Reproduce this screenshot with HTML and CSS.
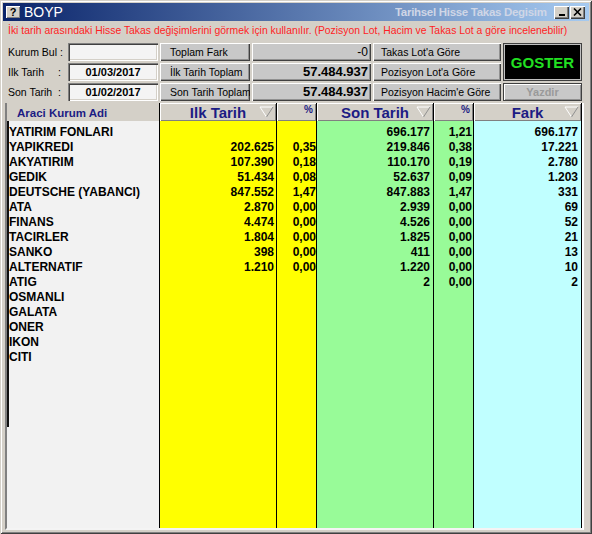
FILE: index.html
```html
<!DOCTYPE html>
<html lang="tr">
<head>
  <meta charset="UTF-8">
  <title>BOYP</title>
  <link rel="stylesheet" href="styles.css">
</head>
<body>
  <div class="window">
    <!-- Title bar -->
    <div class="titlebar">
      <span class="app-icon">?</span>
      <span class="app-name">BOYP</span>
      <span class="caption">Tarihsel Hisse Takas Degisim</span>
      <span class="tb-btns">
        <button class="tb-btn"><svg width="8" height="8" viewBox="0 0 8 8"><rect x="1" y="6" width="6" height="2" fill="#000"/></svg></button>
        <button class="tb-btn"><svg width="9" height="8" viewBox="0 0 9 8"><path d="M1 0.5 L8 7.5 M8 0.5 L1 7.5" stroke="#000" stroke-width="1.6"/></svg></button>
      </span>
    </div>

    <div class="notice">İki tarih arasındaki Hisse Takas değişimlerini görmek için kullanılır. (Pozisyon Lot, Hacim ve Takas Lot a göre incelenebilir)</div>

    <!-- Filter / totals area -->
    <div class="controls">
      <label class="lbl"><span>Kurum Bul</span><span>:</span></label>
      <input class="field" type="text" value="">
      <button class="btn">Toplam Fark</button>
      <div class="value">-0</div>
      <button class="btn opt">Takas Lot'a Göre</button>
      <button class="goster">GOSTER</button>

      <label class="lbl"><span>Ilk Tarih</span><span>:</span></label>
      <input class="field date" type="text" value="01/03/2017" readonly>
      <button class="btn">İlk Tarih Toplam</button>
      <div class="value big">57.484.937</div>
      <button class="btn opt">Pozisyon Lot'a Göre</button>

      <label class="lbl"><span>Son Tarih</span><span>:</span></label>
      <input class="field date" type="text" value="01/02/2017" readonly>
      <button class="btn">Son Tarih Toplam</button>
      <div class="value big">57.484.937</div>
      <button class="btn opt">Pozisyon Hacim'e Göre</button>
      <button class="yazdir" disabled>Yazdir</button>
    </div>

    <!-- Result grid -->
    <div class="grid">
      <div class="col col-name">
        <div class="col-head name-head">Araci Kurum Adi</div>
        <div class="col-body">
          <div class="name-list">
            <div class="cell">YATIRIM FONLARI</div>
            <div class="cell">YAPIKREDI</div>
            <div class="cell">AKYATIRIM</div>
            <div class="cell">GEDIK</div>
            <div class="cell">DEUTSCHE (YABANCI)</div>
            <div class="cell">ATA</div>
            <div class="cell">FINANS</div>
            <div class="cell">TACIRLER</div>
            <div class="cell">SANKO</div>
            <div class="cell">ALTERNATIF</div>
            <div class="cell">ATIG</div>
            <div class="cell">OSMANLI</div>
            <div class="cell">GALATA</div>
            <div class="cell">ONER</div>
            <div class="cell">IKON</div>
            <div class="cell">CITI</div>
          </div>
        </div>
      </div>

      <div class="col col-num yellow">
        <div class="col-head sort-head"><span></span><span>Ilk Tarih</span><svg class="sort-arrow" width="15" height="12" viewBox="0 0 15 12"><path d="M1 1 H14" stroke="#fff"/><path d="M1 1 L7.5 11" stroke="#fff"/><path d="M14 1 L7.5 11" stroke="#909090"/></svg></div>
        <div class="col-body">
          <div class="cell"></div>
          <div class="cell">202.625</div>
          <div class="cell">107.390</div>
          <div class="cell">51.434</div>
          <div class="cell">847.552</div>
          <div class="cell">2.870</div>
          <div class="cell">4.474</div>
          <div class="cell">1.804</div>
          <div class="cell">398</div>
          <div class="cell">1.210</div>
        </div>
      </div>

      <div class="col col-pct yellow">
        <div class="col-head pct-head">%</div>
        <div class="col-body">
          <div class="cell"></div>
          <div class="cell">0,35</div>
          <div class="cell">0,18</div>
          <div class="cell">0,08</div>
          <div class="cell">1,47</div>
          <div class="cell">0,00</div>
          <div class="cell">0,00</div>
          <div class="cell">0,00</div>
          <div class="cell">0,00</div>
          <div class="cell">0,00</div>
        </div>
      </div>

      <div class="col col-num col-son green">
        <div class="col-head sort-head"><span></span><span>Son Tarih</span><svg class="sort-arrow" width="15" height="12" viewBox="0 0 15 12"><path d="M1 1 H14" stroke="#fff"/><path d="M1 1 L7.5 11" stroke="#fff"/><path d="M14 1 L7.5 11" stroke="#909090"/></svg></div>
        <div class="col-body">
          <div class="cell">696.177</div>
          <div class="cell">219.846</div>
          <div class="cell">110.170</div>
          <div class="cell">52.637</div>
          <div class="cell">847.883</div>
          <div class="cell">2.939</div>
          <div class="cell">4.526</div>
          <div class="cell">1.825</div>
          <div class="cell">411</div>
          <div class="cell">1.220</div>
          <div class="cell">2</div>
        </div>
      </div>

      <div class="col col-pct col-pct2 green">
        <div class="col-head pct-head">%</div>
        <div class="col-body">
          <div class="cell">1,21</div>
          <div class="cell">0,38</div>
          <div class="cell">0,19</div>
          <div class="cell">0,09</div>
          <div class="cell">1,47</div>
          <div class="cell">0,00</div>
          <div class="cell">0,00</div>
          <div class="cell">0,00</div>
          <div class="cell">0,00</div>
          <div class="cell">0,00</div>
          <div class="cell">0,00</div>
        </div>
      </div>

      <div class="col col-fark cyan">
        <div class="col-head sort-head"><span></span><span>Fark</span><svg class="sort-arrow" width="15" height="12" viewBox="0 0 15 12"><path d="M1 1 H14" stroke="#fff"/><path d="M1 1 L7.5 11" stroke="#fff"/><path d="M14 1 L7.5 11" stroke="#909090"/></svg></div>
        <div class="col-body">
          <div class="cell">696.177</div>
          <div class="cell">17.221</div>
          <div class="cell">2.780</div>
          <div class="cell">1.203</div>
          <div class="cell">331</div>
          <div class="cell">69</div>
          <div class="cell">52</div>
          <div class="cell">21</div>
          <div class="cell">13</div>
          <div class="cell">10</div>
          <div class="cell">2</div>
        </div>
      </div>
    </div>
  </div>
</body>
</html>
```

FILE: styles.css
```css
/* Page / window frame */
body {
  margin: 0;
  background: #d4d0c8;
  font-family: "Liberation Sans", Arial, sans-serif;
}

.window {
  width: 592px;
  height: 534px;
  box-sizing: border-box;
  padding: 3px 3px 4px 3px;
  display: flex;
  flex-direction: column;
  background: #d4d0c8;
  box-shadow: inset 1px 1px #d4d0c8, inset -1px -1px #404040, inset 2px 2px #fff, inset -2px -2px #808080;
}

/* Title bar */
.titlebar {
  height: 18px;
  display: flex;
  align-items: center;
  padding: 0 4px 0 3px;
  background: linear-gradient(to right, #0a246a, #a6caf0);
  color: #fff;
}

.app-icon {
  width: 14px;
  height: 12px;
  background: #d4d0c8;
  color: #000;
  font-size: 11px;
  font-weight: bold;
  line-height: 12px;
  text-align: center;
  box-shadow: inset 1px 1px #fff, inset -1px -1px #808080;
}

.app-name {
  margin-left: 4px;
  font-size: 14px;
}

.caption {
  margin-left: auto;
  width: 158px;
  overflow: hidden;
  white-space: nowrap;
  font-size: 11.5px;
  letter-spacing: -0.3px;
  font-weight: bold;
  color: #cfd6e6;
}

.tb-btns {
  display: flex;
  gap: 1px;
  margin-left: 1px;
}

.tb-btn {
  width: 15px;
  height: 13px;
  padding: 0;
  border: none;
  background: #d4d0c8;
  display: flex;
  align-items: center;
  justify-content: center;
  box-shadow: inset 1px 1px #fff, inset -1px -1px #404040, inset -2px -2px #808080;
}

/* Red hint line */
.notice {
  height: 20px;
  line-height: 20px;
  padding-left: 5px;
  color: #ff1e24;
  font-size: 10.4px;
  white-space: nowrap;
  overflow: hidden;
}

/* Controls */
.controls {
  margin: 2px 0 0 5px;
  display: grid;
  grid-template-columns: 58px 90px 90px 119px 128px 79px;
  grid-template-rows: 18px 18px 18px;
  gap: 2px;
}

.lbl {
  display: grid;
  grid-template-columns: 1fr auto;
  column-gap: 3px;
  align-items: center;
  padding-right: 5px;
  font-size: 10.5px;
  white-space: nowrap;
  color: #000;
}

.field {
  width: 100%;
  height: 18px;
  box-sizing: border-box;
  border: none;
  outline: none;
  padding: 0;
  background: #f4f4f4;
  font-family: inherit;
  font-size: 11px;
  font-weight: bold;
  text-align: center;
  box-shadow: inset 1px 1px #808080, inset 2px 2px #404040, inset -1px -1px #fff, inset -2px -2px #d4d0c8;
}

.btn {
  border: none;
  background: #c8c8c8;
  padding: 0 0 0 10px;
  text-align: left;
  font-family: inherit;
  font-size: 10.5px;
  color: #000;
  white-space: nowrap;
  overflow: hidden;
  box-shadow: inset 1px 1px #fff, inset -1px -1px #404040, inset -2px -2px #909090;
}

.btn.opt {
  padding-left: 8px;
}

.value {
  background: #c8c8c8;
  text-align: right;
  padding-right: 3px;
  font-size: 12px;
  line-height: 18px;
  box-shadow: inset 1px 1px #fff, inset -1px -1px #404040, inset -2px -2px #909090;
}

.value.big {
  font-size: 13px;
  font-weight: bold;
}

.goster {
  grid-column: 6;
  grid-row: 1 / span 2;
  border: 1px solid #404040;
  background: #000;
  color: #22e022;
  font-family: inherit;
  font-size: 15px;
  font-weight: bold;
  box-shadow: inset 0 0 0 1px #c0c0c0;
}

.yazdir {
  grid-column: 6;
  border: 1px solid #404040;
  background: #c8c8c8;
  color: #9a9a9a;
  font-family: inherit;
  font-size: 11px;
  font-weight: bold;
  box-shadow: inset 1px 1px #fff, inset -1px -1px #909090;
}

/* Grid */
.grid {
  flex: 1;
  margin: 2px 5px 0 2px;
  display: flex;
  border-left: 2px solid #808080;
  border-right: 2px solid #fff;
  border-bottom: 2px solid #f4f4f4;
  font-size: 12px;
  font-weight: bold;
}

.col {
  display: flex;
  flex-direction: column;
  box-sizing: border-box;
  border-right: 1px solid #000;
}

.col-head {
  height: 18px;
  flex: none;
  background: #d4d0c8;
  color: #1c1c84;
}

.col-body {
  flex: 1;
  padding-top: 4px;
  text-align: right;
}

.cell {
  height: 15px;
  line-height: 15px;
  white-space: nowrap;
}

.col-name { width: 153px; }
.col-num { width: 117px; }
.col-pct { width: 40px; }
.col-fark { flex: 1; }

.col-name .col-body {
  background: #f2f2f2;
  text-align: left;
}

.name-list {
  height: 302px;
  margin-top: -4px;
  padding-top: 4px;
  border-left: 2px solid #101010;
}

.name-head {
  padding-left: 10px;
  font-size: 11.5px;
  line-height: 20px;
}

.sort-head {
  display: grid;
  grid-template-columns: 1fr auto 1fr;
  align-items: center;
  font-size: 15px;
  box-shadow: inset 1px 1px #fff, inset -1px -1px #808080;
}

.sort-arrow {
  justify-self: end;
  margin-right: 2px;
}

.pct-head {
  text-align: right;
  padding-right: 3px;
  font-size: 10px;
  line-height: 14px;
  box-shadow: inset 1px 1px #fff, inset -1px -1px #808080;
}

.yellow .col-body { background: #ffff00; }
.green .col-body { background: #98fb98; }
.cyan .col-body { background: #c0ffff; }

.col-num .col-body { padding-right: 2px; }
.col-son .col-body { padding-right: 3px; }
.col-pct .col-body { padding-right: 0; }
.col-pct2 .col-body { padding-right: 1px; }
.col-fark .col-body { padding-right: 3px; }
```
